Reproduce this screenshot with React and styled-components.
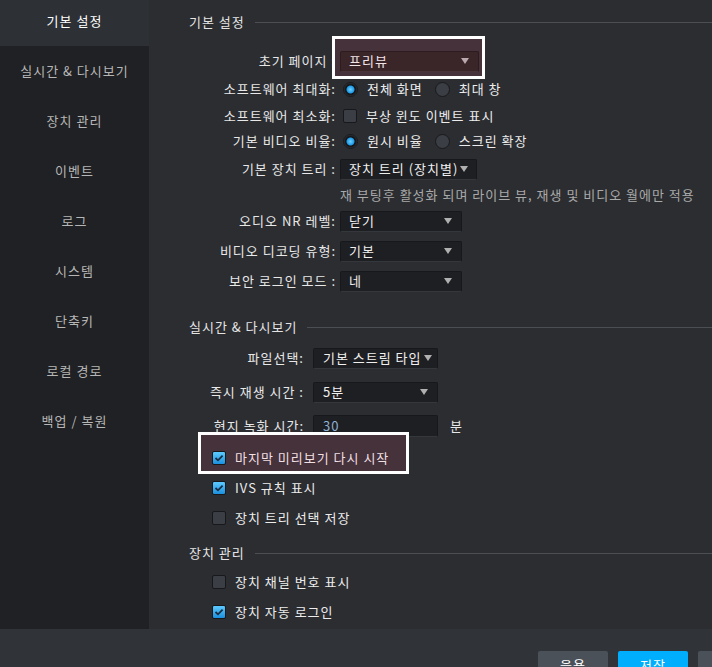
import React from "react";
import styled, { createGlobalStyle } from "styled-components";

const GlobalStyle = createGlobalStyle`
  html, body {
    margin: 0;
    padding: 0;
    background: #2b2d31;
  }
  body {
    font-family: "Noto Sans CJK KR", "Noto Sans", sans-serif;
    font-size: 13px;
    letter-spacing: 1px;
  }
`;

const Shell = styled.div`
  width: 712px;
  height: 667px;
  display: flex;
  flex-direction: column;
  overflow: hidden;
`;

const Body = styled.div`
  display: flex;
  height: 629px;
  flex-shrink: 0;
`;

const Sidebar = styled.nav`
  width: 149px;
  flex-shrink: 0;
  background: #202124;
  overflow: hidden;
`;

const NavList = styled.ul`
  list-style: none;
  margin: -4px 0 0;
  padding: 0;
`;

const NavItem = styled.li`
  height: 50px;
  display: flex;
  align-items: center;
  justify-content: center;
  line-height: 16px;
  color: ${(p) => (p.$active ? "#ffffff" : "#b6b6b6")};
  background: ${(p) => (p.$active ? "#2d3034" : "transparent")};
`;

const Main = styled.main`
  flex: 1;
  background: #2b2d31;
  padding: 11px 0 0 40px;
  overflow: hidden;
  color: #e8e8e8;
`;

const SectionHead = styled.div`
  display: flex;
  align-items: center;
  gap: 10px;
  height: 22px;
  margin-top: ${(p) => p.$mt || 0}px;
`;

const Title = styled.span`
  color: #e4e4e4;
  line-height: 16px;
  white-space: nowrap;
`;

const Rule = styled.div`
  flex: 1;
  height: 1px;
  background: #4b4e53;
`;

const Row = styled.div`
  display: flex;
  align-items: center;
  height: 22px;
  margin-top: ${(p) => p.$mt || 0}px;
  padding-left: ${(p) => p.$indent || 0}px;
  line-height: 16px;
  white-space: nowrap;
`;

const Label = styled.span`
  width: ${(p) => p.$w}px;
  margin-right: ${(p) => p.$gap}px;
  flex-shrink: 0;
  text-align: right;
  color: #e8e8e8;
`;

const Select = styled.div`
  width: ${(p) => p.$w}px;
  height: 21px;
  box-sizing: border-box;
  display: flex;
  align-items: center;
  justify-content: space-between;
  padding: 0 ${(p) => p.$pr || 9}px 0 ${(p) => p.$pl || 8}px;
  border-radius: 2px;
  background: ${(p) => (p.$accent ? "#3a2529" : "#1e1f22")};
  border: 1px solid ${(p) => (p.$accent ? "#2d1b1f" : "#17181b")};
  border-bottom-color: ${(p) => (p.$accent ? "#4a3439" : "#34373c")};
  color: ${(p) => (p.$accent ? "#f2e4e7" : "#f0f0f0")};
`;

const Arrow = styled.span`
  width: 0;
  height: 0;
  border-left: 4.5px solid transparent;
  border-right: 4.5px solid transparent;
  border-top: 6px solid ${(p) => (p.$accent ? "#b9a8ad" : "#b0b0b0")};
  flex-shrink: 0;
`;

const TextInput = styled.div`
  width: ${(p) => p.$w}px;
  height: 22px;
  box-sizing: border-box;
  display: flex;
  align-items: center;
  padding-left: 9px;
  background: #1e1f22;
  border: 1px solid #17181b;
  border-bottom-color: #34373c;
  border-radius: 2px;
  color: #8fb1d3;
`;

const Unit = styled.span`
  margin-left: 12px;
  color: #e8e8e8;
`;

const Hint = styled.span`
  color: #a9a9a9;
`;

const Option = styled.label`
  display: flex;
  align-items: center;
  gap: 9px;
  margin-right: 12px;
  color: #ececec;
`;

const Radio = styled.span`
  width: 15px;
  height: 15px;
  box-sizing: border-box;
  border-radius: 50%;
  margin-left: ${(p) => p.$ml || 0}px;
  background: ${(p) =>
    p.$on
      ? "radial-gradient(circle, #6fd0ff 0, #1e9be6 3.5px, #111214 4.5px, #1b1c1f 5.5px, #3b3e44 7px)"
      : "#3b3e44"};
  border: 1px solid #18191c;
  flex-shrink: 0;
`;

const Box = styled.span`
  width: 14px;
  height: 14px;
  box-sizing: border-box;
  border-radius: 2px;
  margin-left: ${(p) => p.$ml || 0}px;
  display: flex;
  align-items: center;
  justify-content: center;
  background: ${(p) =>
    p.$on ? "linear-gradient(#5ccaff, #1b90de)" : "#3b3e44"};
  border: 1px solid #17181b;
  flex-shrink: 0;
`;

const Check = ({ on, ml }) => (
  <Box $on={on} $ml={ml}>
    {on && (
      <svg width="10" height="8" viewBox="0 0 10 8">
        <path d="M1.5 4 L4 6.3 L8.6 1.6" fill="none" stroke="#1b2c40" strokeWidth="1.8" />
      </svg>
    )}
  </Box>
);

const Highlight = styled.div`
  position: relative;
  z-index: 1;
  display: flex;
  align-items: center;
  margin-top: ${(p) => p.$mt || 0}px;
  &::before {
    content: "";
    position: absolute;
    inset: ${(p) => p.$inset};
    border: 3px solid #ffffff;
    background: #45323a;
    z-index: -1;
  }
`;

const PinkText = styled.span`
  color: #f0dfe3;
`;

const Footer = styled.footer`
  height: 38px;
  flex-shrink: 0;
  background: #303338;
  display: flex;
  gap: 10px;
  padding: 22px 0 0 538px;
  box-sizing: border-box;
  overflow: hidden;
`;

const Button = styled.button`
  width: 70px;
  height: 26px;
  flex-shrink: 0;
  border: none;
  border-radius: 2px;
  font-family: inherit;
  font-size: 13px;
  letter-spacing: 1px;
  color: #ffffff;
  background: ${(p) => (p.$primary ? "#00aefe" : "#4a5159")};
  padding: 0;
`;

const navItems = [
  "기본 설정",
  "실시간 & 다시보기",
  "장치 관리",
  "이벤트",
  "로그",
  "시스템",
  "단축키",
  "로컬 경로",
  "백업 / 복원",
];

const L1 = 147;
const G1 = 4;
const L2 = 115;
const G2 = 9;

export default function App() {
  return (
    <>
      <GlobalStyle />
      <Shell>
        <Body>
          <Sidebar>
            <NavList>
              {navItems.map((t, i) => (
                <NavItem key={t} $active={i === 0}>
                  {t}
                </NavItem>
              ))}
            </NavList>
          </Sidebar>
          <Main>
            <SectionHead>
              <Title>기본 설정</Title>
              <Rule />
            </SectionHead>

            <Row $mt={17}>
              <Label $w={L1} $gap={G1}>초기 페이지 :</Label>
              <Highlight $inset="-15px -6px -7px -8px">
                <Select $w={139} $accent>
                  프리뷰
                  <Arrow $accent />
                </Select>
              </Highlight>
            </Row>

            <Row $mt={6}>
              <Label $w={L1} $gap={G1}>소프트웨어 최대화:</Label>
              <Option>
                <Radio $on $ml={3} />
                전체 화면
              </Option>
              <Option>
                <Radio />
                최대 창
              </Option>
            </Row>

            <Row $mt={5}>
              <Label $w={L1} $gap={G1}>소프트웨어 최소화:</Label>
              <Option>
                <Check ml={3} />
                부상 윈도 이벤트 표시
              </Option>
            </Row>

            <Row $mt={3}>
              <Label $w={L1} $gap={G1}>기본 비디오 비율:</Label>
              <Option>
                <Radio $on $ml={3} />
                원시 비율
              </Option>
              <Option>
                <Radio />
                스크린 확장
              </Option>
            </Row>

            <Row $mt={6}>
              <Label $w={L1} $gap={G1}>기본 장치 트리 :</Label>
              <Select $w={137} $pr={8}>
                장치 트리 (장치별)
                <Arrow />
              </Select>
            </Row>

            <Row $mt={4}>
              <Label $w={L1} $gap={G1} />
              <Hint>재 부팅후 활성화 되며 라이브 뷰, 재생 및 비디오 월에만 적용</Hint>
            </Row>

            <Row $mt={4}>
              <Label $w={L1} $gap={G1}>오디오 NR 레벨:</Label>
              <Select $w={122}>
                닫기
                <Arrow />
              </Select>
            </Row>

            <Row $mt={8}>
              <Label $w={L1} $gap={G1}>비디오 디코딩 유형:</Label>
              <Select $w={122}>
                기본
                <Arrow />
              </Select>
            </Row>

            <Row $mt={8}>
              <Label $w={L1} $gap={G1}>보안 로그인 모드 :</Label>
              <Select $w={122}>
                네
                <Arrow />
              </Select>
            </Row>

            <SectionHead $mt={24}>
              <Title>실시간 &amp; 다시보기</Title>
              <Rule />
            </SectionHead>

            <Row $mt={9}>
              <Label $w={L2} $gap={G2}>파일선택:</Label>
              <Select $w={125} $pl={9} $pr={5}>
                기본 스트림 타입
                <Arrow />
              </Select>
            </Row>

            <Row $mt={12}>
              <Label $w={L2} $gap={G2}>즉시 재생 시간 :</Label>
              <Select $w={125} $pl={9}>
                5분
                <Arrow />
              </Select>
            </Row>

            <Row $mt={12}>
              <Label $w={L2} $gap={G2}>현지 녹화 시간:</Label>
              <TextInput $w={125}>30</TextInput>
              <Unit>분</Unit>
            </Row>

            <Highlight $mt={10} $inset="-15px 303px -5px 9px">
              <Row $indent={23}>
                <Option>
                  <Check on />
                  <PinkText>마지막 미리보기 다시 시작</PinkText>
                </Option>
              </Row>
            </Highlight>

            <Row $mt={8} $indent={23}>
              <Option>
                <Check on />
                IVS 규칙 표시
              </Option>
            </Row>

            <Row $mt={8} $indent={23}>
              <Option>
                <Check />
                장치 트리 선택 저장
              </Option>
            </Row>

            <SectionHead $mt={13}>
              <Title>장치 관리</Title>
              <Rule />
            </SectionHead>

            <Row $mt={7} $indent={23}>
              <Option>
                <Check />
                장치 채널 번호 표시
              </Option>
            </Row>

            <Row $mt={8} $indent={23}>
              <Option>
                <Check on />
                장치 자동 로그인
              </Option>
            </Row>
          </Main>
        </Body>
        <Footer>
          <Button>응용</Button>
          <Button $primary>저장</Button>
          <Button>취소</Button>
        </Footer>
      </Shell>
    </>
  );
}
